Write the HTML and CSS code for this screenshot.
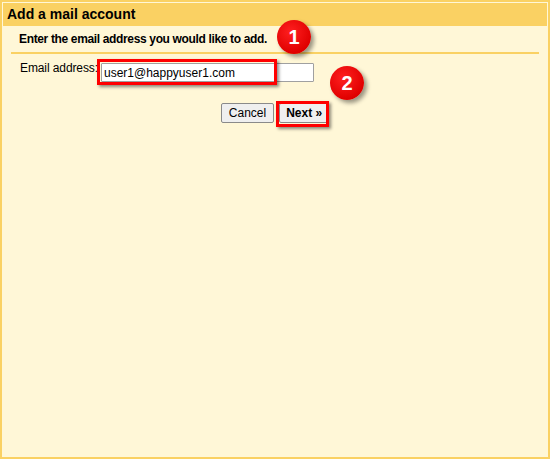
FILE: index.html
```html
<!DOCTYPE html>
<html>
<head>
<meta charset="utf-8">
<link rel="stylesheet" href="styles.css">
</head>
<body>
<div class="dialog">
  <div class="header">Add a mail account</div>
  <div class="content">
    <div class="intro">Enter the email address you would like to add.</div>
    <div class="form-row">
      <label class="label">Email address:</label>
      <div class="field">
        <input class="input" type="text" value="user1@happyuser1.com">
        <span class="hl hl-input"></span>
      </div>
    </div>
    <div class="buttons">
      <button class="btn">Cancel</button>
      <div class="next-wrap">
        <button class="btn btn-next">Next »</button>
        <span class="hl hl-next"></span>
      </div>
    </div>
  </div>
  <span class="badge badge-1">1</span>
  <span class="badge badge-2">2</span>
</div>
</body>
</html>
```
FILE: styles.css
```css
html, body {
  margin: 0;
  padding: 0;
}
body {
  font-family: "Liberation Sans", Arial, sans-serif;
  color: #000;
}
.dialog {
  position: relative;
  box-sizing: border-box;
  width: 550px;
  height: 459px;
  border: 2px solid #fad163;
  padding: 1px;
  background: #fff7d7;
}
.header {
  height: 23px;
  background: #fad163;
  font-weight: bold;
  font-size: 14px;
  line-height: 23px;
  padding-left: 4px;
}
.content {
  padding: 0 8px;
}
.intro {
  font-size: 12px;
  font-weight: bold;
  letter-spacing: -0.35px;
  padding: 6px 0 6px 8px;
  line-height: 14px;
  border-bottom: 2px solid #fad163;
}
.form-row {
  display: flex;
  align-items: flex-start;
  padding: 6px 0 0 9px;
}
.label {
  font-size: 12px;
  line-height: 14px;
  padding-top: 1px;
  letter-spacing: -0.1px;
}
.field {
  position: relative;
  margin-left: 3px;
}
.input {
  box-sizing: border-box;
  width: 213px;
  height: 19px;
  border: 1px solid #a0a0a0;
  border-radius: 1px;
  font-family: "Liberation Sans", Arial, sans-serif;
  font-size: 12px;
  padding: 0 2px;
  margin: 3px 0 0 0;
  background: #fff;
  color: #000;
  display: block;
}
.hl {
  position: absolute;
  border: 3px solid #ff0000;
  box-shadow: 2px 2px 3px rgba(0,0,0,0.45);
  pointer-events: none;
}
.hl-input {
  left: -4px;
  top: -1px;
  width: 174px;
  height: 20px;
}
.buttons {
  display: flex;
  justify-content: center;
  gap: 5px;
  padding: 21px 0 0 0;
}
.next-wrap {
  position: relative;
}
.btn {
  font-family: "Liberation Sans", Arial, sans-serif;
  font-size: 12px;
  height: 20px;
  padding: 0 7px;
  border: 1px solid #8a8a8a;
  border-radius: 2px;
  background: #efefef;
  color: #000;
  line-height: 18px;
  display: block;
}
.btn-next {
  font-weight: bold;
  padding: 0 6px;
}
.hl-next {
  left: -3px;
  top: -2px;
  width: 47px;
  height: 20px;
}
.badge {
  position: absolute;
  width: 34px;
  height: 34px;
  border-radius: 50%;
  background: radial-gradient(circle at 40% 35%, #ff2020, #e00000 70%, #c80000);
  color: #fff;
  font-weight: bold;
  font-size: 20px;
  line-height: 34px;
  text-align: center;
  box-shadow: 3px 3px 4px rgba(0,0,0,0.4);
}
.badge-1 {
  left: 275px;
  top: 18px;
}
.badge-2 {
  left: 328px;
  top: 64px;
}
```
